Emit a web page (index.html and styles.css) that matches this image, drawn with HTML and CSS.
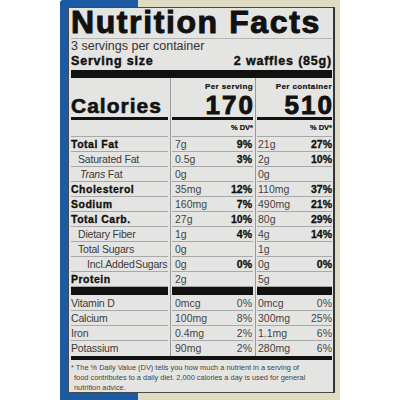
FILE: index.html
```html
<!DOCTYPE html>
<html lang="en">
<head>
  <meta charset="UTF-8" />
  <meta name="viewport" content="width=device-width, initial-scale=1" />
  <title>Nutrition Facts</title>
  <link rel="stylesheet" href="styles.css">
</head>
<body>

<div class="package">
  <div class="label">
    <h1 class="title">Nutrition Facts</h1>
    <p class="servings">3 servings per container</p>
    <div class="serving-size">
      <span>Serving size</span>
      <span>2 waffles (85g)</span>
    </div>
    <div class="thick-bar"></div>

    <!-- Tabel nilai gizi -->
    <div class="facts">
      <div class="cell head head-label">Calories</div>
      <div class="cell head head-num"><small>Per serving</small><strong>170</strong></div>
      <div class="cell head head-num"><small>Per container</small><strong>510</strong></div>

      <div class="cell dv"></div>
      <div class="cell dv">% DV*</div>
      <div class="cell dv">% DV*</div>

      <div class="cell name bold">Total Fat</div>
      <div class="cell val"><span>7g</span><b>9%</b></div>
      <div class="cell val"><span>21g</span><b>27%</b></div>

      <div class="cell name sub">Saturated Fat</div>
      <div class="cell val"><span>0.5g</span><b>3%</b></div>
      <div class="cell val"><span>2g</span><b>10%</b></div>

      <div class="cell name sub trans"><i>Trans</i> Fat</div>
      <div class="cell val"><span>0g</span></div>
      <div class="cell val"><span>0g</span></div>

      <div class="cell name bold">Cholesterol</div>
      <div class="cell val"><span>35mg</span><b>12%</b></div>
      <div class="cell val"><span>110mg</span><b>37%</b></div>

      <div class="cell name bold">Sodium</div>
      <div class="cell val"><span>160mg</span><b>7%</b></div>
      <div class="cell val"><span>490mg</span><b>21%</b></div>

      <div class="cell name bold">Total Carb.</div>
      <div class="cell val"><span>27g</span><b>10%</b></div>
      <div class="cell val"><span>80g</span><b>29%</b></div>

      <div class="cell name sub">Dietary Fiber</div>
      <div class="cell val"><span>1g</span><b>4%</b></div>
      <div class="cell val"><span>4g</span><b>14%</b></div>

      <div class="cell name sub">Total Sugars</div>
      <div class="cell val"><span>0g</span></div>
      <div class="cell val"><span>1g</span></div>

      <div class="cell name sub2">Incl.Added Sugars</div>
      <div class="cell val"><span>0g</span><b>0%</b></div>
      <div class="cell val"><span>0g</span><b>0%</b></div>

      <div class="cell name bold">Protein</div>
      <div class="cell val"><span>2g</span></div>
      <div class="cell val"><span>5g</span></div>

      <div class="cell bar"></div>
      <div class="cell bar"></div>
      <div class="cell bar"></div>

      <div class="cell name first-micro">Vitamin D</div>
      <div class="cell val light first-micro"><span>0mcg</span><b>0%</b></div>
      <div class="cell val light first-micro"><span>0mcg</span><b>0%</b></div>

      <div class="cell name">Calcium</div>
      <div class="cell val light"><span>100mg</span><b>8%</b></div>
      <div class="cell val light"><span>300mg</span><b>25%</b></div>

      <div class="cell name">Iron</div>
      <div class="cell val light"><span>0.4mg</span><b>2%</b></div>
      <div class="cell val light"><span>1.1mg</span><b>6%</b></div>

      <div class="cell name last">Potassium</div>
      <div class="cell val light last"><span>90mg</span><b>2%</b></div>
      <div class="cell val light last"><span>280mg</span><b>6%</b></div>
    </div>

    <p class="footnote">* The % Daily Value (DV) tells you how much a nutrient in a serving of<br>food contributes to a daily diet. 2,000 calories a day is used for general<br>nutrition advice.</p>
  </div>
</div>

</body>
</html>
```

FILE: styles.css
```css
* {
  box-sizing: border-box;
}

body {
  margin: 0;
  background: #fff;
  font-family: 'Liberation Sans', Arial, sans-serif;
  color: #111;
}

/* Kemasan */
.package {
  width: 280px;
  height: 400px;
  margin-left: 60px;
  padding: 7px 5px 7px 8px;
  background: linear-gradient(to right, #1c5aa3 78px, #dfdbc2 78px);
  border-top-left-radius: 3px;
}

.label {
  height: 100%;
  background: #e4e4e2;
  border: 1px solid #4a4a4a;
  border-right: 2px solid #333;
  padding: 0 1px 0 2px;
}

.title {
  margin: 0;
  height: 31px;
  font-size: 32px;
  line-height: 29px;
  font-weight: 700;
  letter-spacing: 1.6px;
  -webkit-text-stroke: 1px #111;
  border-bottom: 1px solid #b5b5b5;
  white-space: nowrap;
}

.servings {
  margin: 0;
  font-size: 12.5px;
  line-height: 15px;
  color: #333;
}

.serving-size {
  display: flex;
  justify-content: space-between;
  font-size: 12.5px;
  line-height: 14px;
  font-weight: 700;
  letter-spacing: 0.8px;
  -webkit-text-stroke: 0.4px #111;
  margin-bottom: 2px;
}

.thick-bar {
  height: 8px;
  background: #111;
}

/* Tabel */
.facts {
  display: grid;
  grid-template-columns: 97px 81px 75px;
  column-gap: 4px;
  background:
    linear-gradient(#9a9a9a, #9a9a9a) 99px 0 / 1px 100% no-repeat,
    linear-gradient(#9a9a9a, #9a9a9a) 184px 0 / 1px 100% no-repeat;
}

.cell {
  height: 15px;
  font-size: 10.5px;
  line-height: 14px;
  border-bottom: 1px solid #a8a8a8;
  white-space: nowrap;
}

.head {
  height: 42px;
  border-bottom: 3px solid #111;
  display: flex;
  flex-direction: column;
}

.head-label {
  justify-content: flex-end;
  padding-bottom: 1px;
  font-size: 21px;
  line-height: 20px;
  font-weight: 700;
  letter-spacing: 1px;
  -webkit-text-stroke: 0.6px #111;
}

.head-num {
  align-items: flex-end;
  padding-top: 4px;
}

.head-num small {
  font-size: 8px;
  line-height: 9px;
  font-weight: 700;
  letter-spacing: 0.4px;
  -webkit-text-stroke: 0.2px #111;
}

.head-num strong {
  font-size: 26px;
  line-height: 29px;
  letter-spacing: 2px;
  margin-right: -2px;
  -webkit-text-stroke: 0.9px #111;
}

.dv {
  height: 17px;
  font-size: 7.5px;
  line-height: 16px;
  font-weight: 700;
  text-align: right;
  -webkit-text-stroke: 0.2px #111;
}

.name {
  color: #3a3a3a;
  letter-spacing: -0.2px;
}

.name.bold {
  color: #111;
  font-weight: 700;
  letter-spacing: 0.5px;
  -webkit-text-stroke: 0.3px #111;
}

.name.sub {
  padding-left: 7px;
}

.name.trans {
  padding-left: 9px;
}

.name.sub2 {
  padding-left: 16px;
  word-spacing: -2px;
}

.val {
  display: flex;
  justify-content: space-between;
  padding: 0 1px 0 3px;
  color: #444;
}

.val + .val {
  padding: 0 0 0 1px;
}

.val b {
  color: #111;
  -webkit-text-stroke: 0.3px #111;
}

.val.light b {
  font-weight: 400;
  color: #444;
  -webkit-text-stroke: 0;
}

.bar {
  height: 8px;
  border: none;
  background: #111;
}

.first-micro {
  height: 16px;
  line-height: 16px;
}

.last {
  border-bottom: none;
}

.footnote {
  margin: 0;
  border-top: 4px solid #111;
  padding: 3px 0 0 3px;
  text-indent: -3px;
  font-size: 7.4px;
  line-height: 10px;
  color: #444;
  white-space: nowrap;
}
```
